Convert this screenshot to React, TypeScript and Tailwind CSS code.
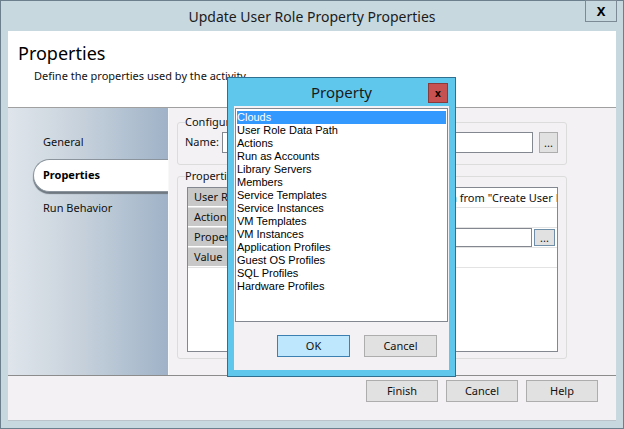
import React from "react";

const seg = "font-['Noto_Sans',sans-serif]";
const mss = "font-['Liberation_Sans',Arial,sans-serif]";

const items = [
  "Clouds",
  "User Role Data Path",
  "Actions",
  "Run as Accounts",
  "Library Servers",
  "Members",
  "Service Templates",
  "Service Instances",
  "VM Templates",
  "VM Instances",
  "Application Profiles",
  "Guest OS Profiles",
  "SQL Profiles",
  "Hardware Profiles",
];

function WinButton({ label, className = "" }: { label: string; className?: string }) {
  return (
    <button
      className={`h-[22px] border border-[#adadad] bg-[#e1e1e1] text-[11px] text-[#111] ${className}`}
    >
      {label}
    </button>
  );
}

function PropertyDialog() {
  return (
    <div className="absolute left-[226px] top-[76px] flex h-[300px] w-[229px] flex-col border border-[#2f6f8f] bg-[#60c7ec] px-[6px] pb-[6px]">
      {/* title */}
      <div className="relative flex h-[28px] items-center justify-center">
        <span className="text-[15px] text-[#1a1a1a]">Property</span>
        <button className="absolute right-[1px] top-[5px] flex h-[20px] w-[20px] items-center justify-center border border-[#8a3a3a] bg-[#c75050] text-[10px] font-bold leading-none text-black">
          x
        </button>
      </div>
      {/* body */}
      <div className="flex flex-1 flex-col bg-[#f3f1f4] px-[1px] pt-[2px]">
        <div className={`h-[214px] border border-[#828790] bg-white px-[1px] py-[2px] ${mss} text-[11px] leading-[13px] text-black`}>
          {items.map((it, i) => (
            <div
              key={it}
              className={i === 0 ? "bg-[#3399ff] text-white" : ""}
            >
              {it}
            </div>
          ))}
        </div>
        <div className="mt-[13px] flex justify-end gap-[14px] pr-[11px]">
          <WinButton label="OK" className="h-[21px] w-[73px] !border-[#3c7fb1] !bg-[#bee6fd]" />
          <WinButton label="Cancel" className="h-[21px] w-[73px]" />
        </div>
      </div>
    </div>
  );
}

export default function App() {
  const navItem = "flex h-[33px] items-center pl-[35px] text-[11px] text-[#111]";
  return (
    <div className={`relative flex h-[429px] w-[624px] flex-col border border-[#6b808c] bg-[#c8d8df] ${seg}`}>
      {/* title bar */}
      <div className="relative flex h-[30px] shrink-0 items-center justify-center">
        <span className="text-[14px] text-[#1b1b1b]">Update User Role Property Properties</span>
        <button className="absolute right-[6px] top-[-1px] flex h-[22px] w-[32px] items-center justify-center border border-[#7b8a94] text-[13px] font-bold leading-none text-black">
          X
        </button>
      </div>

      {/* client */}
      <div className="mx-[7px] mb-[7px] flex flex-1 flex-col border-b border-[#b9c3c9] bg-[#f4f1f4]">
        <div className="h-[77px] shrink-0 border-b border-[#a0a0a0] bg-white pl-[10px] pt-[9px]">
          <div className="text-[18px] leading-[26px] text-black">Properties</div>
          <div className="mt-[2px] pl-[16px] text-[11px] text-[#111]">Define the properties used by the activity.</div>
        </div>

        <div className="flex h-[268px] shrink-0 border-b border-[#8c8c8c]">
          {/* nav */}
          <div className="w-[160px] shrink-0 bg-[linear-gradient(to_right,#dfe5eb,#cdd6df_35%,#b9c7d5_65%,#9fb2c7)] pt-[18px]">
            <div className={navItem}>General</div>
            <div className="ml-[25px] flex h-[33px] items-center rounded-l-[17px] border border-r-0 border-[#8b949c] bg-white pl-[9px] text-[11px] font-bold text-black shadow-[0_2px_1px_#6f7880]">
              Properties
            </div>
            <div className={navItem}>Run Behavior</div>
          </div>

          {/* content */}
          <div className="flex-1 border-l border-[#f8f8f8] pl-[8px] pt-[6px] text-[#111]">
            <fieldset className="w-[390px] rounded-[3px] border border-[#dcdcdc] px-[7px] pb-[11px]">
              <legend className="text-[11px] leading-[16px]">Configuration</legend>
              <div className="mt-[2px] flex items-center text-[11px]">
                <span className="w-[37px]">Name:</span>
                <input className="h-[21px] w-[311px] border border-[#828790] bg-white" />
                <button className="ml-[6px] h-[21px] w-[19px] border border-[#adadad] bg-[#e1e1e1] text-[11px] leading-none">
                  ...
                </button>
              </div>
            </fieldset>

            <fieldset className="mt-[3px] h-[191px] w-[390px] rounded-[3px] border border-[#dcdcdc] px-[7px]">
              <legend className="text-[11px] leading-[16px]">Properties</legend>
              <div className="ml-[2px] mt-[3px] h-[165px] w-[371px] overflow-hidden border border-[#828790] bg-white text-[11px]">
                {[
                  ["User Role", 'Published data from "Create User Role"'],
                  ["Action Type", ""],
                  ["Property", "input"],
                  ["Value", ""],
                ].map(([label, value]) => (
                  <div key={label} className="flex h-[20px] border-b border-[#e3e3e3]">
                    <div className="flex w-[188px] shrink-0 items-center border-r border-b border-white bg-[#c8c8c8] pl-[6px]">
                      {label}
                    </div>
                    {value === "input" ? (
                      <div className="flex min-w-0 flex-1 items-center">
                        <input className="h-[19px] w-0 min-w-0 flex-1 border border-[#828790] bg-white" />
                        <button className="ml-[2px] mr-[2px] h-[17px] w-[21px] shrink-0 border border-[#6f8fa8] bg-[#e1e1e1] text-[11px] leading-none">
                          ...
                        </button>
                      </div>
                    ) : (
                      <div className="min-w-0 flex-1 overflow-hidden whitespace-nowrap pl-[4px] leading-[20px]">{value}</div>
                    )}
                  </div>
                ))}
              </div>
            </fieldset>
          </div>
        </div>

        <div className="flex flex-1 items-start justify-end gap-[8px] pr-[18px] pt-[4px]">
          <WinButton label="Finish" className="w-[72px]" />
          <WinButton label="Cancel" className="w-[72px]" />
          <WinButton label="Help" className="w-[72px]" />
        </div>
      </div>

      <PropertyDialog />
    </div>
  );
}
